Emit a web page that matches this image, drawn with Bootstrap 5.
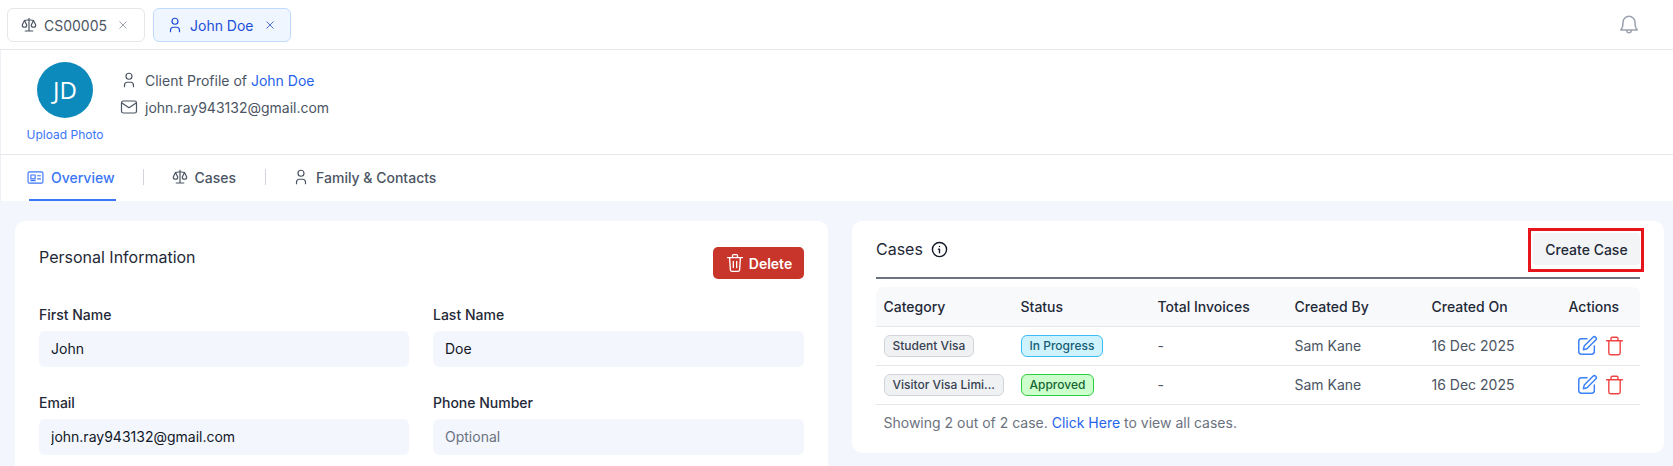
<!doctype html>
<html lang="en">
<head>
<meta charset="utf-8">
<title>Client Profile</title>
<link rel="stylesheet" href="https://cdn.jsdelivr.net/npm/bootstrap@5.3.0/dist/css/bootstrap.min.css">
<style>
html,body{height:466px;overflow:hidden}
body{font-family:Inter,"Liberation Sans",sans-serif;font-size:14px;background:#f3f6fd;color:#1f2937}
svg{flex:none;display:block}
.ico{fill:none;stroke:currentColor;stroke-width:1.6;stroke-linecap:round;stroke-linejoin:round}
.topbar{height:50px;background:#fff;border-bottom:1px solid #e5e7eb;padding:8px 0 0 7px;gap:8px}
.doc-tab{height:34px;width:138px;border:1px solid #e5e7eb;border-radius:6px;background:#fff;color:#4b5563;padding-left:12px;font-size:14px}
.tab-x{color:#9ca3af}
.doc-tab.on{background:#eff6ff;border-color:#bfdbfe;color:#1d4ed8}
.doc-tab.on .tab-x{color:#4f6fd0}
.doc-tab .tab-name{margin-left:6px;margin-right:12px}
.bell{color:#9ca3af;margin:5px 33px 0 auto}
.profile{height:105px;background:#fff;border-bottom:1px solid #e5e7eb;border-left:1px solid #eef0f5;padding:12px 0 0 26px}
.avatar-col{width:76px}
.avatar{width:56px;height:56px;border-radius:50%;background:#0d8abc;color:#fff;font-family:"Open Sans",sans-serif;font-size:24px}
.upload{font-size:12px;color:#3b76f6;margin-top:9px;line-height:15px;white-space:nowrap}
.who{margin-left:17px;color:#4b5563;font-size:14px;padding-top:4px}
.who-row{height:28px;gap:7px}
.who-row + .who-row{margin-top:-1px}
.who a{color:#2563eb;text-decoration:none}
.tabsbar{height:46px;background:#fff;border-left:1px solid #eef0f5;padding-left:26px;color:#4b5563}
.tabitem{height:46px;gap:6px;font-weight:500;font-size:14px;padding-bottom:2px}
.tabitem.on{color:#3b76f6;position:relative;gap:7px}
.tabitem.on::after{content:"";position:absolute;left:2px;right:-1px;bottom:0;height:2px;background:#3b76f6}
.tabsep{width:1px;height:16px;background:#d1d5db;margin:-2px 27px 0 28px}
.tabsep-last{margin-left:29px;margin-right:26px}
.content{padding:20px 9px 0 15px;gap:24px;align-items:flex-start}
.panel{background:#fff;border-radius:10px;border:0}
.panel-left{width:813px;padding:25px 24px 24px;flex:none}
.panel-right{width:812px;height:232px;padding:12px 24px 0;flex:none}
.panel-title{font-size:16px;font-weight:400;color:#1f2937;margin:0;line-height:22px}
.btn-del{width:91px;height:32px;background:#c8352b;color:#fff;border:0;border-radius:5px;font-weight:600;font-size:14px;padding:0;gap:4px;margin-top:1px}
.fgrid{display:grid;grid-template-columns:370px 371px;column-gap:24px;row-gap:27px;margin-top:27px}
.flabel{font-size:14px;font-weight:500;color:#1f2937;margin:0 0 7px;line-height:18px;display:block}
.finput{height:36px;background:#f3f6fd;border:0;border-radius:6px;padding:0 12px 1px;font-size:14px;color:#111827}
.finput::placeholder{color:#6b7280}
.panelhead{height:46px;border-bottom:2px solid #6b7280;width:764px;margin-bottom:8px}
.title-wrap{height:32px}
.info{color:#111827;stroke-width:2}
.hilite{position:relative;display:block}
.hilite::after{content:"";position:absolute;inset:-5px -4px -7px -5px;border:3px solid #e8141c;pointer-events:none}
.btn-create{display:block;width:107px;height:32px;background:#f3f4f6;border:0;border-radius:4px;color:#1f2937;font-size:14px;font-weight:500;padding:0}
.ctable{table-layout:fixed;width:764px;margin:0;font-size:14px}
.ctable th{background:#f8f9fb;height:39px;font-weight:500;color:#1f2937;padding:0 8px 0 7.5px;vertical-align:middle;border-bottom:1px solid #e5e7eb;white-space:nowrap}
.ctable th:first-child{border-top-left-radius:8px}
.ctable th:last-child{border-top-right-radius:8px}
.ctable td{height:39px;padding:0 8px 0 7.5px;vertical-align:middle;color:#4b5563;border-bottom:1px solid #e5e7eb;white-space:nowrap;box-shadow:none}
.chip{display:inline-block;font-size:12px;font-weight:500;line-height:20px;border-radius:6px;padding:0 8px;border:1px solid;white-space:nowrap}
.chip-grey{background:#eff1f3;border-color:#d1d5db;color:#374151}
.chip-blue{background:#cff2ff;border-color:#38bdf8;color:#155e75}
.chip-green{background:#ccffcc;border-color:#2ecc40;color:#166534}
.acts{gap:6px;padding-left:7px}
.foot{font-size:14px;color:#6b7280;padding:7px 8px 0 7.5px}
.foot a{color:#2563eb;text-decoration:none}
</style>
</head>
<body>
<div class="topbar d-flex align-items-start">
  <div class="doc-tab d-flex align-items-center">
    <svg class="ico" width="18" height="18" viewBox="0 0 24 24"><path d="M7 20h10M6 6l6-1 6 1M12 3v17M9 12 6 6l-3 6a3 3 0 0 0 6 0M21 12l-3-6-3 6a3 3 0 0 0 6 0"/></svg>
    <span class="tab-name">CS00005</span>
    <svg class="tab-x" width="8" height="8" viewBox="0 0 8 8" fill="none" stroke="currentColor" stroke-width="1"><path d="M.5.5l7 7M7.500.5l-7 7"/></svg>
  </div>
  <div class="doc-tab on d-flex align-items-center">
    <svg class="ico" width="18" height="18" viewBox="0 0 24 24"><path d="M8 7a4 4 0 1 0 8 0 4 4 0 0 0-8 0M6 21v-2a4 4 0 0 1 4-4h4a4 4 0 0 1 4 4v2"/></svg>
    <span class="tab-name">John Doe</span>
    <svg class="tab-x" width="8" height="8" viewBox="0 0 8 8" fill="none" stroke="currentColor" stroke-width="1"><path d="M.5.5l7 7M7.500.5l-7 7"/></svg>
  </div>
  <svg class="ico bell" width="22" height="24" viewBox="0 0 24 24"><path d="M12 2.500a6.500 6.500 0 0 0-6.500 6.500c0 4-.7 6.500-2.500 8.500h18c-1.800-2-2.500-4.500-2.500-8.500A6.500 6.500 0 0 0 12 2.500zM9.500 18a2.500 2.500 0 0 0 5 0"/></svg>
</div>

<div class="profile d-flex align-items-start">
  <div class="avatar-col d-flex flex-column align-items-center">
    <div class="avatar d-flex align-items-center justify-content-center">JD</div>
    <div class="upload">Upload Photo</div>
  </div>
  <div class="who">
    <div class="who-row d-flex align-items-center">
      <svg class="ico" width="18" height="18" viewBox="0 0 24 24"><path d="M8 7a4 4 0 1 0 8 0 4 4 0 0 0-8 0M6 21v-2a4 4 0 0 1 4-4h4a4 4 0 0 1 4 4v2"/></svg>
      <span>Client Profile of <a href="#">John Doe</a></span>
    </div>
    <div class="who-row d-flex align-items-center">
      <svg class="ico" width="18" height="18" viewBox="0 0 24 24"><rect x="2" y="4" width="20" height="16" rx="2.500"/><path d="m3 7 9 6 9-6"/></svg>
      <span>john.ray943132@gmail.com</span>
    </div>
  </div>
</div>

<div class="tabsbar d-flex align-items-center">
  <div class="tabitem on d-flex align-items-center">
    <svg class="ico" width="17" height="17" viewBox="0 0 24 24"><rect x="1.500" y="4" width="21" height="16" rx="2"/><rect x="5.500" y="8.500" width="6" height="5.500"/><path d="M5.500 16.500h6M15 9.500h4M15 14h4"/></svg>
    <span>Overview</span>
  </div>
  <div class="tabsep"></div>
  <div class="tabitem d-flex align-items-center">
    <svg class="ico" width="18" height="18" viewBox="0 0 24 24"><path d="M7 20h10M6 6l6-1 6 1M12 3v17M9 12 6 6l-3 6a3 3 0 0 0 6 0M21 12l-3-6-3 6a3 3 0 0 0 6 0"/></svg>
    <span>Cases</span>
  </div>
  <div class="tabsep tabsep-last"></div>
  <div class="tabitem d-flex align-items-center">
    <svg class="ico" width="18" height="18" viewBox="0 0 24 24"><path d="M8 7a4 4 0 1 0 8 0 4 4 0 0 0-8 0M6 21v-2a4 4 0 0 1 4-4h4a4 4 0 0 1 4 4v2"/></svg>
    <span>Family &amp; Contacts</span>
  </div>
</div>

<div class="content d-flex">
  <section class="panel panel-left">
    <div class="d-flex justify-content-between align-items-start">
      <h2 class="panel-title">Personal Information</h2>
      <button class="btn btn-del d-flex align-items-center justify-content-center" type="button">
        <svg class="ico" width="20" height="22" viewBox="0 0 24 24"><path d="M3 5.500h18M9 5.500V3a1 1 0 0 1 1-1h4a1 1 0 0 1 1 1v2.500M5.500 5.500l1 15a2 2 0 0 0 2 1.500h7a2 2 0 0 0 2-1.500l1-15M10 10v7.500M14 10v7.500"/></svg>
        Delete
      </button>
    </div>
    <div class="fgrid">
      <div><label class="flabel" for="f1">First Name</label><input id="f1" class="form-control finput" value="John"></div>
      <div><label class="flabel" for="f2">Last Name</label><input id="f2" class="form-control finput" value="Doe"></div>
      <div><label class="flabel" for="f3">Email</label><input id="f3" class="form-control finput" value="john.ray943132@gmail.com"></div>
      <div><label class="flabel" for="f4">Phone Number</label><input id="f4" class="form-control finput" placeholder="Optional"></div>
    </div>
  </section>

  <section class="panel panel-right">
    <div class="panelhead d-flex justify-content-between align-items-start">
      <div class="title-wrap d-flex align-items-center gap-2">
        <h2 class="panel-title">Cases</h2>
        <svg class="ico info" width="17" height="17" viewBox="0 0 24 24"><circle cx="12" cy="12" r="10"/><path d="M12 11.500v5M12 7.800v.1M10.500 11.500H12"/></svg>
      </div>
      <span class="hilite"><button class="btn btn-create" type="button">Create Case</button></span>
    </div>
    <table class="table ctable">
      <colgroup><col style="width:137px"><col style="width:137px"><col style="width:137px"><col style="width:137px"><col style="width:137px"><col style="width:79px"></colgroup>
      <thead><tr><th>Category</th><th>Status</th><th>Total Invoices</th><th>Created By</th><th>Created On</th><th>Actions</th></tr></thead>
      <tbody>
        <tr>
          <td><span class="chip chip-grey">Student Visa</span></td>
          <td><span class="chip chip-blue">In Progress</span></td>
          <td>-</td><td>Sam Kane</td><td>16 Dec 2025</td>
          <td><div class="acts d-flex align-items-center">
            <svg class="ico" width="22" height="22" viewBox="0 0 24 24" style="color:#3b82f6"><path d="M12 4H6a3 3 0 0 0-3 3v11a3 3 0 0 0 3 3h11a3 3 0 0 0 3-3v-6"/><path d="M18.500 2.500a2.100 2.100 0 0 1 3 3L12 15l-4 1 1-4z"/></svg>
            <svg class="ico" width="21" height="22" viewBox="0 0 24 24" style="color:#ef4444"><path d="M3 6h18M8 6V3.500A1.500 1.500 0 0 1 9.500 2h5A1.500 1.500 0 0 1 16 3.500V6M5.500 6v14a2 2 0 0 0 2 2h9a2 2 0 0 0 2-2V6"/></svg>
          </div></td>
        </tr>
        <tr>
          <td><span class="chip chip-grey">Visitor Visa Limi...</span></td>
          <td><span class="chip chip-green">Approved</span></td>
          <td>-</td><td>Sam Kane</td><td>16 Dec 2025</td>
          <td><div class="acts d-flex align-items-center">
            <svg class="ico" width="22" height="22" viewBox="0 0 24 24" style="color:#3b82f6"><path d="M12 4H6a3 3 0 0 0-3 3v11a3 3 0 0 0 3 3h11a3 3 0 0 0 3-3v-6"/><path d="M18.500 2.500a2.100 2.100 0 0 1 3 3L12 15l-4 1 1-4z"/></svg>
            <svg class="ico" width="21" height="22" viewBox="0 0 24 24" style="color:#ef4444"><path d="M3 6h18M8 6V3.500A1.500 1.500 0 0 1 9.500 2h5A1.500 1.500 0 0 1 16 3.500V6M5.500 6v14a2 2 0 0 0 2 2h9a2 2 0 0 0 2-2V6"/></svg>
          </div></td>
        </tr>
      </tbody>
    </table>
    <div class="foot">Showing 2 out of 2 case. <a href="#">Click Here</a> to view all cases.</div>
  </section>
</div>
<script src="https://cdn.jsdelivr.net/npm/bootstrap@5.3.0/dist/js/bootstrap.bundle.min.js"></script>
</body>
</html>
